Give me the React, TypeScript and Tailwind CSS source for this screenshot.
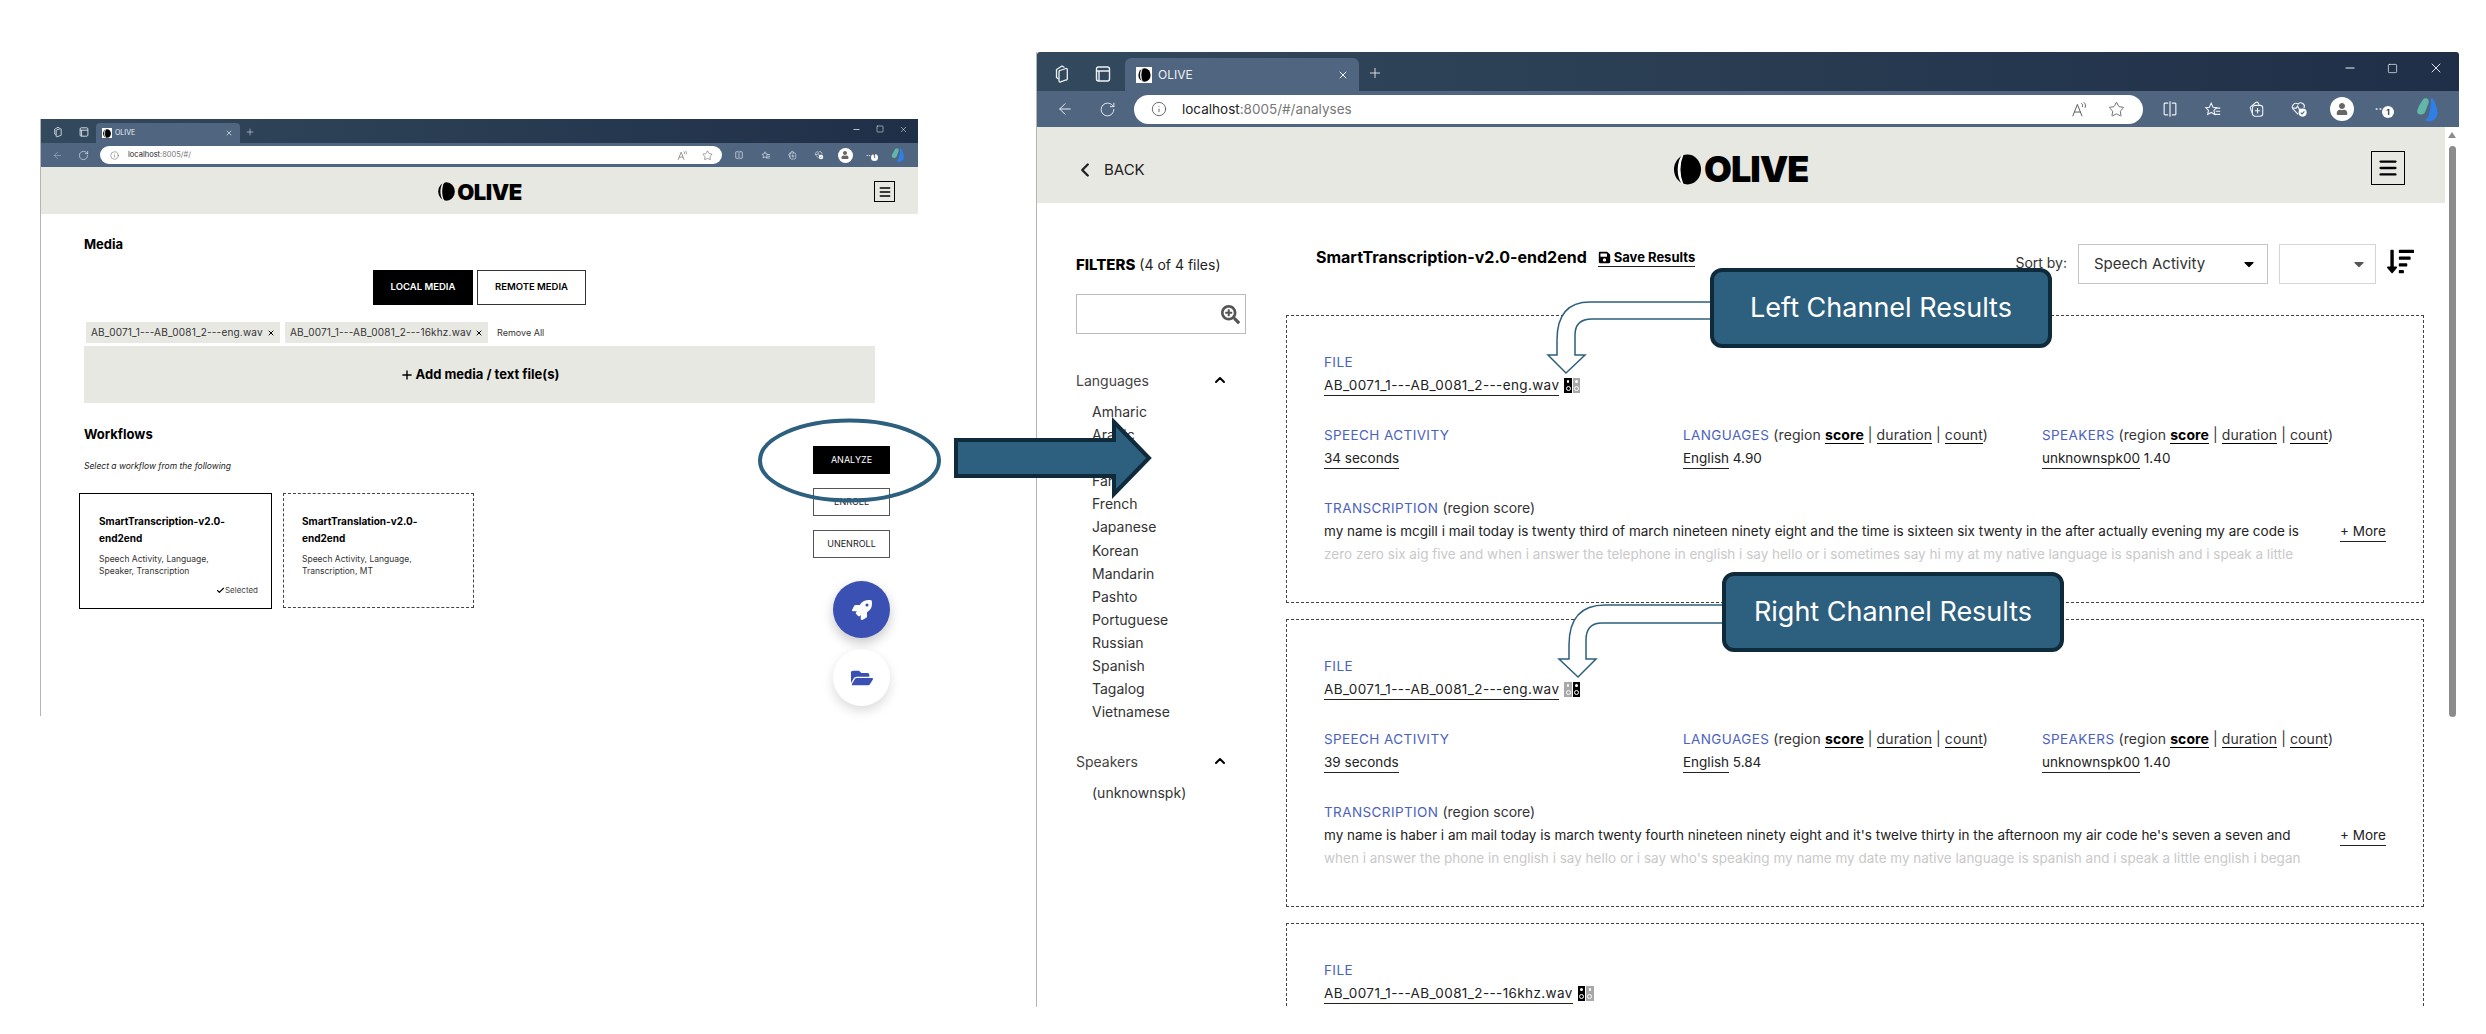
import { ArrowLeft, ChevronLeft, ChevronUp, Check, Info, Menu, Minus, Plus, RotateCw, Square, Star, X } from "lucide-react";
import { FaCaretDown, FaFolderOpen, FaRocket, FaSave, FaSearchPlus, FaSortAmountDown, FaUser } from "react-icons/fa";

const languages = ["Amharic", "Arabic", "English", "Farsi", "French", "Japanese", "Korean", "Mandarin", "Pashto", "Portuguese", "Russian", "Spanish", "Tagalog", "Vietnamese"];

const results = [
  {
    file: "AB_0071_1---AB_0081_2---eng.wav",
    left: true,
    speech: "34 seconds",
    score: "4.90",
    line1: "my name is mcgill i mail today is twenty third of march nineteen ninety eight and the time is sixteen six twenty in the after actually evening my are code is",
    line2: "zero zero six aig five and when i answer the telephone in english i say hello or i sometimes say hi my at my native language is spanish and i speak a little",
  },
  {
    file: "AB_0071_1---AB_0081_2---eng.wav",
    left: false,
    speech: "39 seconds",
    score: "5.84",
    line1: "my name is haber i am mail today is march twenty fourth nineteen ninety eight and it's twelve thirty in the afternoon my air code he's seven a seven and",
    line2: "when i answer the phone in english i say hello or i say who's speaking my name my date my native language is spanish and i speak a little english i began",
  },
];

function Logo({ className }: { className: string }) {
  return (
    <svg viewBox="0 0 28 32" className={className}>
      <ellipse cx="14" cy="16" rx="14" ry="15.5" fill="#000" />
      <path d="M9 1 C3 9 3 23 9 31 C5 22 5 10 9 1 Z" fill="#fff" stroke="#fff" strokeWidth="1.4" />
    </svg>
  );
}

function TabsIcon({ className }: { className: string }) {
  return (
    <svg viewBox="0 0 20 20" fill="none" stroke="currentColor" strokeWidth="1.3" className={className}>
      <path d="M8 6.5 L14 4.5 a1 1 0 0 1 1.3 1 V15 a1 1 0 0 1 -1.3 1 L8 18 a1 1 0 0 1 -1 -1 V7.5 a1 1 0 0 1 1 -1 Z" />
      <path d="M6.5 15 L4.5 13.5 V5.5 L10 2 L12.5 3.5" />
    </svg>
  );
}

function VerticalTabsIcon({ className }: { className: string }) {
  return (
    <svg viewBox="0 0 20 20" fill="none" stroke="currentColor" strokeWidth="1.4" className={className}>
      <rect x="3.5" y="3" width="13" height="14" rx="2" />
      <path d="M3.5 7 H16.5 M6 7 V17" />
    </svg>
  );
}

function ReadAloudIcon({ className }: { className: string }) {
  return (
    <svg viewBox="0 0 20 20" fill="none" stroke="currentColor" strokeWidth="1.1" className={className}>
      <path d="M2 18 L7.5 4 L13 18 M4 13 H11" />
      <path d="M12 2.5 C13.5 3.5 14 5 13.5 7 M15 1.5 C17 3 17.5 5.5 16.5 8" />
    </svg>
  );
}

function SplitIcon({ className }: { className: string }) {
  return (
    <svg viewBox="0 0 20 20" fill="none" stroke="currentColor" strokeWidth="1.3" className={className}>
      <path d="M8 3.5 H4.5 a1 1 0 0 0 -1 1 V15.5 a1 1 0 0 0 1 1 H8 M12 3.5 H15.5 a1 1 0 0 1 1 1 V15.5 a1 1 0 0 1 -1 1 H12 M10 1.5 V18.5" />
    </svg>
  );
}

function FavoritesIcon({ className }: { className: string }) {
  return (
    <svg viewBox="0 0 20 20" fill="none" stroke="currentColor" strokeWidth="1.2" className={className}>
      <path d="M8 2.5 L10 7 L14 7.5 L11 10.5 L12 15 L8 12.8 L4 15 L5 10.5 L2 7.5 L6 7 Z" transform="translate(0 1)" />
      <path d="M13 9 H18 M13 12.5 H18 M11 16 H18" />
    </svg>
  );
}

function CollectionsIcon({ className }: { className: string }) {
  return (
    <svg viewBox="0 0 20 20" fill="none" stroke="currentColor" strokeWidth="1.2" className={className}>
      <rect x="6" y="6" width="11.5" height="12" rx="3" />
      <path d="M11.7 9 V15 M8.8 12 H14.6" />
      <path d="M6 15 L3.8 9.5 a2 2 0 0 1 1 -2.6 L10 2.6 a2 2 0 0 1 2.6 1 L13.5 6" />
    </svg>
  );
}

function HeartIcon({ className }: { className: string }) {
  return (
    <svg viewBox="0 0 20 20" fill="none" stroke="currentColor" strokeWidth="1.2" className={className}>
      <path d="M9 16 L3.2 9.8 a4 4 0 0 1 5.8 -5.3 a4 4 0 0 1 6.5 4.5" />
      <path d="M3 9 H7 L8.5 6.5 L10.5 11 L11.5 9.5" />
      <circle cx="14" cy="14" r="4.5" fill="#fff" stroke="none" />
      <path d="M12 14 L13.5 15.5 L16 12.7" stroke="#4f6580" />
    </svg>
  );
}

function CopilotIcon({ className }: { className: string }) {
  return (
    <svg viewBox="0 0 24 24" className={className}>
      <path d="M8 3 C10 1 14 2 13 6 L10 14 C9 17 5 17 3 15 C2 12 6 6 8 3 Z" fill="#63b7a9" />
      <path d="M15 2 C17 2 17.5 3 19 7 C21 12 22 17 19 20 C17 23 11 23 10 21 C13 20 13 17 14 13 L15 7 Z" fill="#2f7fe6" />
    </svg>
  );
}

function Browser({ small, url }: { small: boolean; url: string }) {
  const ic = small ? "size-[10px]" : "size-[18px]";
  const cell = small ? "flex w-[26.5px] items-center justify-center" : "flex w-[42.8px] items-center justify-center";
  return (
    <div className="text-[#eef1f5]">
      <div className={small ? "flex h-[24px] bg-gradient-to-r from-[#33495d] to-[#1f2f47] pl-[11px]" : "flex h-[39px] bg-gradient-to-r from-[#33495d] to-[#1f2f47] pl-[15px] rounded-t-[3px]"}>
        <div className={small ? "flex items-center gap-[14px] pt-[2px]" : "flex items-center gap-[21px] pt-[4px]"}>
          <TabsIcon className={small ? "size-[12px]" : "size-[20px]"} />
          <VerticalTabsIcon className={small ? "size-[12px]" : "size-[20px]"} />
        </div>
        <div className={small ? "ml-[6px] mt-[4px] flex w-[144px] items-center rounded-t-[4px] bg-[#4f6580] pl-[6px] pr-[7px]" : "ml-[12px] mt-[6px] flex w-[234px] items-center rounded-t-[6px] bg-[#4f6580] pl-[11px] pr-[10px]"}>
          <span className={small ? "flex size-[10px] items-center justify-center bg-white" : "flex size-[16px] items-center justify-center bg-white"}>
            <Logo className={small ? "h-[9px] w-[8px]" : "h-[14px] w-[13px]"} />
          </span>
          <span className={small ? "ml-[3px] flex-1 text-[7px]" : "ml-[6px] flex-1 text-[12px]"}>OLIVE</span>
          <X className={small ? "size-[8px]" : "size-[12px]"} />
        </div>
        <Plus className={small ? "ml-[5px] mt-[8px] size-[10px]" : "ml-[8px] mt-[13px] size-[16px]"} strokeWidth={1.3} />
        <div className={small ? "ml-auto flex items-center gap-[15px] pb-[4px] pr-[10px]" : "ml-auto flex items-center gap-[30px] pb-[7px] pr-[15px]"}>
          <Minus className={small ? "size-[9px]" : "size-[14px]"} />
          <Square className={small ? "size-[8px]" : "size-[11px]"} strokeWidth={1.6} />
          <X className={small ? "size-[9px]" : "size-[16px]"} strokeWidth={1.4} />
        </div>
      </div>
      <div className={small ? "flex h-[24px] items-center bg-[#4f6580] pl-[11px]" : "flex h-[36px] items-center bg-[#4f6580] pl-[19px]"}>
        <ArrowLeft className={small ? "size-[11px] opacity-60" : "size-[18px]"} strokeWidth={1.3} />
        <RotateCw className={small ? "ml-[15px] size-[11px]" : "ml-[25px] size-[17px]"} strokeWidth={1.3} />
        <div className={small ? "ml-[11px] flex h-[18px] w-[622px] items-center rounded-full bg-white pl-[10px] pr-[9px] text-[#555]" : "ml-[18px] flex h-[29px] w-[1009px] items-center rounded-full bg-white pl-[17px] pr-[18px] text-[#555]"}>
          <Info className={small ? "size-[9px]" : "size-[16px]"} strokeWidth={1.3} />
          <span className={small ? "ml-[9px] flex-1 text-[7.5px] text-[#777]" : "ml-[15px] flex-1 text-[13.5px] text-[#777]"}>
            <span className="text-[#222]">localhost</span>{url}
          </span>
          <ReadAloudIcon className={small ? "size-[11px]" : "size-[17px]"} />
          <Star className={small ? "ml-[14px] size-[11px]" : "ml-[20px] size-[17px]"} strokeWidth={1.2} />
        </div>
        <div className={small ? "ml-[4px] flex items-center" : "ml-[6px] flex items-center"}>
          <span className={cell}><SplitIcon className={ic} /></span>
          <span className={cell}><FavoritesIcon className={ic} /></span>
          <span className={cell}><CollectionsIcon className={ic} /></span>
          <span className={cell}><HeartIcon className={ic} /></span>
          <span className={cell}>
            <span className={small ? "flex size-[15px] items-center justify-center rounded-full bg-white" : "flex size-[24px] items-center justify-center rounded-full bg-white"}>
              <FaUser className={small ? "size-[8px] text-[#666]" : "size-[12px] text-[#666]"} />
            </span>
          </span>
          <span className={cell}>
            <span className={small ? "text-[7px] font-bold leading-none" : "text-[11px] font-bold leading-none"}>··</span>
            <span className={small ? "mt-[4px] flex size-[7px] items-center justify-center rounded-full bg-white text-[5px] font-bold text-[#333]" : "mt-[6px] flex size-[12px] items-center justify-center rounded-full bg-white text-[8px] font-bold text-[#333]"}>1</span>
          </span>
          <span className={cell}><CopilotIcon className={small ? "size-[16px]" : "size-[27px]"} /></span>
        </div>
      </div>
    </div>
  );
}

function SpeakerPair({ left }: { left: boolean }) {
  const box = (on: boolean) => (
    <span className={on ? "flex h-[15px] w-[7.5px] shrink-0 flex-col items-center justify-around bg-black py-[1px]" : "flex h-[15px] w-[7.5px] shrink-0 flex-col items-center justify-around bg-[#a8a8a8] py-[1px]"}>
      <span className="size-[2.5px] rounded-full bg-white" />
      <span className="size-[5px] rounded-full border border-white" />
    </span>
  );
  return (
    <span className="ml-[5px] mt-[3px] flex w-[16px] gap-[1px]">
      {box(left)}
      {box(!left)}
    </span>
  );
}

function Label({ children }: { children: React.ReactNode }) {
  return <span className="text-[13.5px] tracking-[0.4px] text-[#4b62bd]">{children}</span>;
}

function MetricOptions() {
  return (
    <span className="ml-[4px] text-[14px] tracking-[0.1px] text-[#333]">
      (region <b className="border-b border-black font-bold text-black">score</b><span className="mx-[4px]">|</span><span className="border-b border-black">duration</span><span className="mx-[4px]">|</span><span className="border-b border-black">count</span>)
    </span>
  );
}

function FileName({ name, left }: { name: string; left: boolean }) {
  return (
    <div className="mt-[3px] flex h-[21px] items-start whitespace-nowrap">
      <span className="border-b border-[#222] tracking-[0.38px]">{name}</span>
      <SpeakerPair left={left} />
    </div>
  );
}

function ResultCard({ r }: { r: (typeof results)[number] }) {
  return (
    <div className="h-[288px] border border-dashed border-[#444] pl-[37px] pt-[36px] text-[13.5px] leading-[20px] text-[#222]">
      <div className="h-[20px]"><Label>FILE</Label></div>
      <FileName name={r.file} left={r.left} />
      <div className="mt-[29px] grid grid-cols-[359px_359px_1fr]">
        <div>
          <div className="h-[20px]"><Label>SPEECH ACTIVITY</Label></div>
          <div className="mt-[3px]"><span className="inline-block border-b border-[#222]">{r.speech}</span></div>
        </div>
        <div>
          <div className="h-[20px] whitespace-nowrap"><Label>LANGUAGES</Label><MetricOptions /></div>
          <div className="mt-[3px]"><span className="inline-block border-b border-[#222]">English</span> {r.score}</div>
        </div>
        <div>
          <div className="h-[20px] whitespace-nowrap"><Label>SPEAKERS</Label><MetricOptions /></div>
          <div className="mt-[3px]"><span className="inline-block border-b border-[#222]">unknownspk00</span> 1.40</div>
        </div>
      </div>
      <div className="mt-[29px] h-[20px]"><Label>TRANSCRIPTION</Label><span className="ml-[4px] text-[14px] text-[#333]">(region score)</span></div>
      <div className="mt-[3px] flex">
        <div className="w-[1016px] whitespace-nowrap">
          <div>{r.line1}</div>
          <div className="mt-[3px] text-[#c9c9c9]">{r.line2}</div>
        </div>
        <div><span className="inline-block border-b border-[#222]">+ More</span></div>
      </div>
    </div>
  );
}

function Hamburger({ className, icon }: { className: string; icon: string }) {
  return (
    <div className={className}>
      <Menu className={icon} strokeWidth={2.6} />
    </div>
  );
}

function MediaWindow() {
  return (
    <div className="mt-[119px] h-[597px] w-[878px] shrink-0 border-l border-[#b5b5b5] bg-white">
      <Browser small url=":8005/#/" />
      <div className="relative flex h-[47px] items-center justify-center bg-[#e8e8e3]">
        <div className="ml-[1px] mt-[2px] flex items-center gap-[2px]">
          <Logo className="h-[19px] w-[17px]" />
          <span className="text-[22px] font-black leading-none tracking-[-0.5px] text-black">OLIVE</span>
        </div>
        <Hamburger className="absolute right-[23px] top-[14px] flex h-[21px] w-[21px] items-center justify-center border border-black" icon="size-[14px] text-black" />
      </div>
      <div className="pl-[43px] pr-[43px]">
        <h2 className="mt-[21px] text-[13px] font-bold leading-[18px] text-black">Media</h2>
        <div className="mt-[17px] flex justify-center gap-[4px] text-[9.5px] font-semibold">
          <button className="h-[35px] w-[100px] bg-black text-white">LOCAL MEDIA</button>
          <button className="h-[35px] w-[109px] border border-[#333] bg-white text-black">REMOTE MEDIA</button>
        </div>
        <div className="ml-[2px] mt-[17px] flex h-[21px] items-center gap-[5px] whitespace-nowrap text-[10px] tracking-[0.2px] text-[#333]">
          <span className="flex h-full w-[194px] items-center justify-between bg-[#e8e8e3] px-[5px]">AB_0071_1---AB_0081_2---eng.wav <X className="size-[8px] text-black" strokeWidth={3} /></span>
          <span className="flex h-full w-[203px] items-center justify-between bg-[#e8e8e3] px-[5px]">AB_0071_1---AB_0081_2---16khz.wav <X className="size-[8px] text-black" strokeWidth={3} /></span>
          <span className="ml-[4px] text-[9px] tracking-normal">Remove All</span>
        </div>
        <div className="mt-[3px] flex h-[57px] items-center justify-center bg-[#e8e8e3] text-[13px] font-bold text-black">
          <Plus className="mr-[2px] size-[14px]" strokeWidth={2.4} /> Add media / text file(s)
        </div>
        <div className="mr-[-15px] flex justify-between">
          <div>
            <h2 className="mt-[22px] text-[13px] font-bold leading-[18px] text-black">Workflows</h2>
            <p className="mt-[17px] text-[8.5px] italic leading-[12px] text-[#222]">Select a workflow from the following</p>
            <div className="ml-[-5px] mt-[21px] flex gap-[11px] text-black">
              <div className="relative h-[116px] w-[193px] border-[1.5px] border-black pl-[19px] pr-[30px] pt-[19px]">
                <div className="text-[10px] font-bold leading-[17px]">SmartTranscription-v2.0-end2end</div>
                <div className="mt-[6px] text-[8.5px] leading-[12px] text-[#333]">Speech Activity, Language, Speaker, Transcription</div>
                <div className="absolute bottom-[12px] right-[13px] flex items-center text-[8px] leading-[12px] text-[#444]"><Check className="size-[9px] text-black" strokeWidth={3} />Selected</div>
              </div>
              <div className="h-[115px] w-[191px] border border-dashed border-[#444] pl-[18px] pr-[40px] pt-[19px]">
                <div className="text-[10px] font-bold leading-[17px]">SmartTranslation-v2.0-end2end</div>
                <div className="mt-[6px] text-[8.5px] leading-[12px] text-[#333]">Speech Activity, Language, Transcription, MT</div>
              </div>
            </div>
          </div>
          <div className="mt-[43px] flex w-[77px] flex-col items-end text-[9px]">
            <button className="h-[28px] w-[77px] bg-black text-white">ANALYZE</button>
            <button className="mt-[14px] h-[28px] w-[77px] border border-[#555] bg-white text-[#222]">ENROLL</button>
            <button className="mt-[14px] h-[28px] w-[77px] border border-[#555] bg-white text-[#222]">UNENROLL</button>
            <div className="mt-[23px] flex size-[57px] items-center justify-center rounded-full bg-[#3a50b2] text-white shadow-[0_5px_12px_rgba(0,0,0,0.22)]">
              <FaRocket className="size-[20px]" />
            </div>
            <div className="mt-[11px] flex size-[57px] items-center justify-center rounded-full bg-white text-[#3a50b2] shadow-[0_5px_12px_rgba(0,0,0,0.14)]">
              <FaFolderOpen className="size-[22px]" />
            </div>
          </div>
        </div>
      </div>
    </div>
  );
}

function FilterGroup({ title, items, mt }: { title: string; items: string[]; mt: string }) {
  return (
    <div className={mt}>
      <div className="flex h-[20px] w-[152px] items-center justify-between text-[14px] text-[#444]">
        {title}
        <ChevronUp className="size-[16px] text-black" strokeWidth={3} />
      </div>
      <ul className="ml-[16px] mt-[10px] text-[14px] leading-[23.1px] text-[#333]">
        {items.map((l) => (
          <li key={l}>{l}</li>
        ))}
      </ul>
    </div>
  );
}

function ResultsWindow() {
  return (
    <div className="ml-[118px] mt-[52px] h-[955px] w-[1423px] shrink-0 overflow-hidden border-l border-[#b5b5b5] bg-white">
      <Browser small={false} url=":8005/#/analyses" />
      <div className="flex">
        <div className="w-[1409px]">
          <div className="relative flex h-[76px] items-center bg-[#e8e8e3] pl-[37px] pt-[10px] text-[#222]">
            <ChevronLeft className="size-[22px]" strokeWidth={2.6} />
            <span className="ml-[8px] text-[15px]">BACK</span>
            <div className="absolute left-[637px] top-[24px] flex items-center gap-[3px]">
              <Logo className="h-[31px] w-[27px]" />
              <span className="text-[36px] font-black leading-none tracking-[-1px] text-black">OLIVE</span>
            </div>
            <Hamburger className="absolute right-[40px] top-[24px] flex h-[34px] w-[34px] items-center justify-center border border-black" icon="size-[22px] text-black" />
          </div>
          <div className="flex">
            <aside className="w-[249px] shrink-0 pl-[39px]">
              <div className="mt-[52px] h-[20px] text-[14px] leading-[20px] text-[#222]"><b className="text-[15px] font-extrabold text-black">FILTERS</b> (4 of 4 files)</div>
              <div className="mt-[19px] flex h-[40px] w-[170px] items-center justify-end border border-[#bbb] pr-[5px] text-[#555]">
                <FaSearchPlus className="size-[19px]" />
              </div>
              <FilterGroup title="Languages" items={languages} mt="mt-[36px]" />
              <FilterGroup title="Speakers" items={["(unknownspk)"]} mt="mt-[28px]" />
            </aside>
            <main className="w-[1138px] shrink-0">
              <div className="mt-[41px] flex h-[40px] items-start">
                <h1 className="ml-[30px] mt-[3px] text-[16px] font-bold leading-[20px] text-black">SmartTranscription-v2.0-end2end</h1>
                <span className="ml-[11px] mt-[5px] flex items-center gap-[3px] border-b border-[#222] text-[13px] font-bold leading-[17px] text-black">
                  <FaSave className="size-[13px]" /> Save Results
                </span>
                <span className="ml-auto mt-[9px] text-[14px] leading-[20px] text-[#333]">Sort by:</span>
                <div className="ml-[11px] flex h-[40px] w-[190px] items-center justify-between border border-[#c4c4cc] pl-[15px] pr-[10px] text-[15px] text-[#333]">
                  Speech Activity <FaCaretDown className="size-[16px] text-black" />
                </div>
                <div className="ml-[11px] flex h-[40px] w-[97px] items-center justify-end border border-[#d4d4da] pr-[8px]">
                  <FaCaretDown className="size-[16px] text-[#555]" />
                </div>
                <FaSortAmountDown className="ml-[11px] mr-[10px] mt-[4px] size-[27px] text-black" />
              </div>
              <div className="mt-[31px] flex flex-col gap-[16px]">
                {results.map((r) => (
                  <ResultCard key={r.speech} r={r} />
                ))}
                <div className="h-[288px] border border-dashed border-[#444] pl-[37px] pt-[36px] text-[13.5px] leading-[20px] text-[#222]">
                  <div className="h-[20px]"><Label>FILE</Label></div>
                  <FileName name="AB_0071_1---AB_0081_2---16khz.wav" left />
                </div>
              </div>
            </main>
          </div>
        </div>
        <div className="flex w-[14px] shrink-0 flex-col items-center bg-white pt-[5px]">
          <span className="size-0 border-x-[4px] border-b-[6px] border-x-transparent border-b-[#8c8c8c]" />
          <span className="mt-[8px] h-[571px] w-[7px] rounded-full bg-[#8c8c8c]" />
        </div>
      </div>
    </div>
  );
}

export default function App() {
  return (
    <div className="relative h-[1034px] w-[2486px] overflow-hidden bg-white font-[Inter,sans-serif]">
      <div className="flex pl-[40px] items-start">
        <MediaWindow />
        <ResultsWindow />
      </div>

      {/* annotations drawn on top of the two windows */}
      <svg className="absolute left-0 top-0" width="2486" height="1034" fill="none">
        <ellipse cx="849.5" cy="460.5" rx="89.5" ry="40" stroke="#2d5f7e" strokeWidth="4" />
        <path d="M956 440 H1114 V422 L1149 458 L1114 494 V476 H956 Z" fill="#2d5f7e" stroke="#0f2a3b" strokeWidth="4" />
        <path d="M1712 302 H1590 Q1557 302 1557 340 V355 H1548 L1566 373 L1585 355 H1575 V335 Q1575 319 1592 319 H1712 Z" fill="#fff" stroke="#2d5f7e" strokeWidth="1.5" />
        <path d="M1724 605 H1605 Q1569 605 1569 645 V659 H1559 L1578 677 L1596 659 H1586 V640 Q1586 623 1602 623 H1724 Z" fill="#fff" stroke="#2d5f7e" strokeWidth="1.5" />
      </svg>
      <div className="absolute left-[1710px] top-[268px] flex h-[80px] w-[342px] items-center justify-center rounded-[12px] border-[4px] border-[#0f2a3b] bg-[#2d5f7e] text-[27px] text-white">
        Left Channel Results
      </div>
      <div className="absolute left-[1722px] top-[572px] flex h-[80px] w-[342px] items-center justify-center rounded-[12px] border-[4px] border-[#0f2a3b] bg-[#2d5f7e] text-[27px] text-white">
        Right Channel Results
      </div>
    </div>
  );
}
